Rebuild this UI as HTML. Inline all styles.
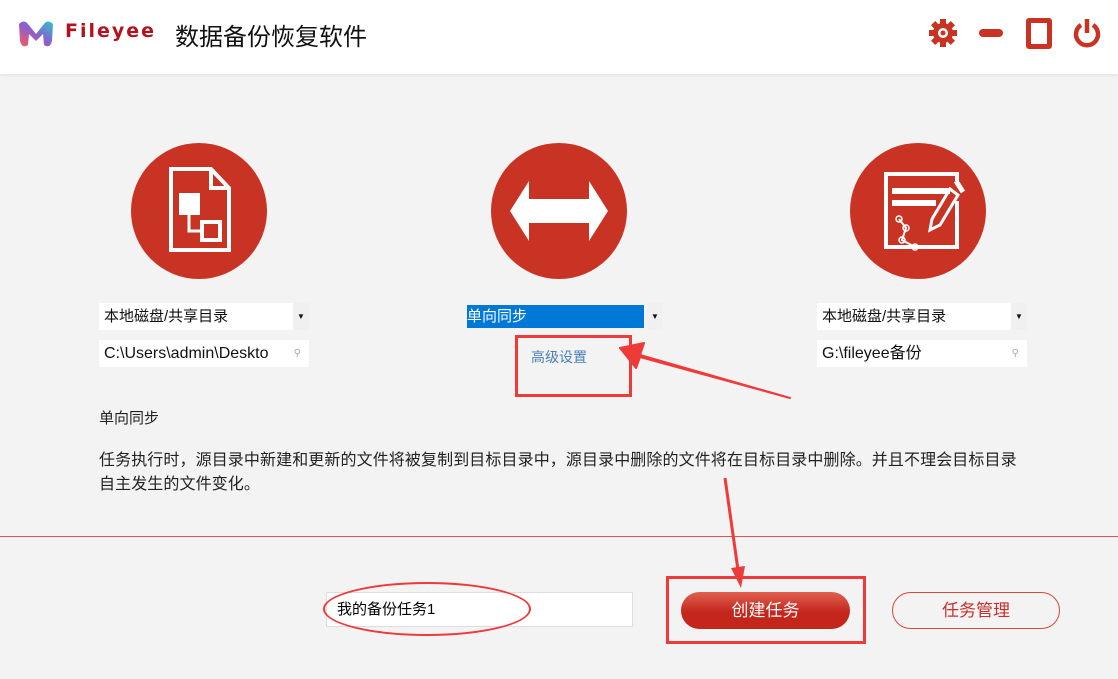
<!DOCTYPE html>
<html><head><meta charset="utf-8"><style>
body{margin:0;width:1118px;height:679px;background:#f3f3f3;position:relative;overflow:hidden;font-family:"Liberation Sans","Noto Sans CJK SC",sans-serif;}
.hdr{position:absolute;left:0;top:0;width:1118px;height:74px;background:#fff;box-shadow:0 1px 3px rgba(0,0,0,.08);}
.abs{position:absolute;}
.circ{position:absolute;width:136px;height:136px;border-radius:50%;background:#c93324;top:143px;}
.sel{position:absolute;height:27px;background:#fff;font-size:15px;line-height:27px;color:#111;}
.sel .dd{position:absolute;right:0;top:0;width:16px;height:27px;background:#f0f0f0;font-size:8px;text-align:center;line-height:27px;}
.txt{font-size:16px;color:#222;}
</style></head><body>
<div class="hdr">
 <svg class="abs" style="left:17px;top:19px" width="38" height="30" viewBox="0 0 38 30">
  <defs><linearGradient id="g" x1="0" y1="1" x2="1" y2="0"><stop offset="0" stop-color="#ff5a5a"/><stop offset=".5" stop-color="#8a5fd0"/><stop offset="1" stop-color="#2fc3c8"/></linearGradient></defs>
  <path d="M2 5 Q7 0 11 5 L19 15 L27 5 Q31 0 36 5 L35 22 Q33 30 27 26 L26 15 L19 22 L12 15 L11 26 Q5 30 3 22 Z" fill="url(#g)"/>
 </svg>
 <div class="abs" style="left:65px;top:20px;font-weight:bold;color:#b3121d;letter-spacing:2px;font-family:'DejaVu Sans',sans-serif;font-size:19px">Fileyee</div>
 <div class="abs" style="left:175px;top:17px;font-size:24px;color:#111;">数据备份恢复软件</div>
 <svg class="abs" style="left:928px;top:18px" width="30" height="30" viewBox="0 0 30 30"><g fill="#c93324"><circle cx="15" cy="15" r="10"/><rect x="12" y="1" width="6" height="28"/><rect x="1" y="12" width="28" height="6"/><rect x="12" y="1" width="6" height="28" transform="rotate(45 15 15)"/><rect x="12" y="1" width="6" height="28" transform="rotate(-45 15 15)"/></g><circle cx="15" cy="15" r="5" fill="#fff"/><circle cx="15" cy="15" r="2.5" fill="#c93324"/></svg>
 <div class="abs" style="left:979px;top:29px;width:24px;height:8px;border-radius:4px;background:#c93324"></div>
 <div class="abs" style="left:1026px;top:18px;width:16px;height:21px;border:5px solid #c93324;border-radius:3px"></div>
 <svg class="abs" style="left:1071px;top:17px" width="32" height="32" viewBox="0 0 32 32"><path d="M10 8 A11 11 0 1 0 22 8" fill="none" stroke="#c93324" stroke-width="4.5"/><line x1="16" y1="2" x2="16" y2="16" stroke="#c93324" stroke-width="4.5"/></svg>
</div>

<div class="circ" style="left:131px"></div>
<div class="circ" style="left:491px"></div>
<div class="circ" style="left:850px"></div>
<svg class="abs" style="left:131px;top:143px" width="136" height="136" viewBox="0 0 136 136">
 <path d="M40 26 H80 L98 45 V107 H40 Z" fill="none" stroke="#fff" stroke-width="4"/>
 <path d="M80 26 V45 H98" fill="none" stroke="#fff" stroke-width="4"/>
 <rect x="48" y="50" width="21" height="22" fill="#fff"/>
 <path d="M58 72 V88 H72" fill="none" stroke="#fff" stroke-width="3"/>
 <rect x="71" y="79" width="18" height="18" fill="none" stroke="#fff" stroke-width="4"/>
</svg>
<svg class="abs" style="left:491px;top:143px" width="136" height="136" viewBox="0 0 136 136"><path d="M19 68 L38 38 V56 H98 V38 L117 68 L98 98 V80 H38 V98 Z" fill="#fff"/></svg>
<svg class="abs" style="left:850px;top:143px" width="136" height="136" viewBox="0 0 136 136">
 <path d="M107 58 V104 H36 V31 H107 V38" fill="none" stroke="#fff" stroke-width="4"/>
 <rect x="42" y="45" width="58" height="6" fill="#fff"/><rect x="42" y="57" width="44" height="6" fill="#fff"/>
 <path d="M108 52 L90 82 L80 87 L82 76 L100 46 Z" fill="none" stroke="#fff" stroke-width="3"/>
 <path d="M106 38 L113 49" stroke="#fff" stroke-width="5"/>
 <path d="M49 76 L56 85 L52 97 L65 104" fill="none" stroke="#fff" stroke-width="2"/>
 <circle cx="49" cy="76" r="3" fill="none" stroke="#fff" stroke-width="1.5"/><circle cx="56" cy="85" r="3" fill="none" stroke="#fff" stroke-width="1.5"/><circle cx="52" cy="97" r="3" fill="none" stroke="#fff" stroke-width="1.5"/><circle cx="65" cy="104" r="3" fill="none" stroke="#fff" stroke-width="1.5"/>
</svg>

<div class="sel" style="left:99px;top:303px;width:210px;padding-left:5px;box-sizing:border-box">本地磁盘/共享目录<div class="dd">▼</div></div>
<div class="sel" style="left:99px;top:340px;width:210px;padding-left:5px;box-sizing:border-box;font-size:16px">C:\Users\admin\Deskto<span style="position:absolute;right:8px;color:#aaa;font-size:10px">&#9906;</span></div>
<div class="sel" style="left:465px;top:303px;width:198px;background:#f3f3f3"><div style="position:absolute;left:2px;top:2px;width:177px;height:23px;background:#0078d7;color:#fff;line-height:23px">单向同步</div><div class="dd">▼</div></div>
<div class="abs" style="left:531px;top:347px;font-size:14px;color:#4a7fb5">高级设置</div>
<div class="abs" style="left:515px;top:335px;width:111px;height:56px;border:3px solid #ef3a3a;"></div>
<div class="sel" style="left:817px;top:303px;width:210px;padding-left:5px;box-sizing:border-box">本地磁盘/共享目录<div class="dd">▼</div></div>
<div class="sel" style="left:817px;top:340px;width:210px;padding-left:5px;box-sizing:border-box;font-size:16px">G:\fileyee备份<span style="position:absolute;right:8px;color:#aaa;font-size:10px">&#9906;</span></div>

<div class="abs txt" style="left:99px;top:407px;font-size:15px">单向同步</div>
<div class="abs txt" style="left:99px;top:449px;line-height:24px;width:960px;letter-spacing:0.1px">任务执行时，源目录中新建和更新的文件将被复制到目标目录中，源目录中删除的文件将在目标目录中删除。并且不理会目标目录<br>自主发生的文件变化。</div>

<div class="abs" style="left:0;top:536px;width:1118px;height:1px;background:#d9534f"></div>

<div class="abs" style="left:326px;top:592px;width:307px;height:35px;background:#fff;border:1px solid #ddd;box-sizing:border-box;font-size:15px;line-height:33px;padding-left:10px">我的备份任务1</div>
<div class="abs" style="left:323px;top:582px;width:208px;height:54px;border:2px solid #ef3a3a;border-radius:50%;box-sizing:border-box"></div>
<div class="abs" style="left:666px;top:576px;width:200px;height:68px;border:3px solid #ef3a3a;box-sizing:border-box"></div>
<div class="abs" style="left:681px;top:592px;width:169px;height:37px;border-radius:19px;background:linear-gradient(#e0604f,#c4261c 55%);color:#fff;font-size:17px;text-align:center;line-height:37px">创建任务</div>
<div class="abs" style="left:892px;top:592px;width:168px;height:37px;border-radius:19px;border:1px solid #d9463c;box-sizing:border-box;color:#c9302c;font-size:17px;text-align:center;line-height:35px">任务管理</div>

<svg class="abs" style="left:0;top:0" width="1118" height="679">
 <path d="M790 398 L640 355 L644 343 L620 348 L636 368 L640 357 Z" fill="#ef3a3a" stroke="#ef3a3a" stroke-width="2" stroke-linejoin="round"/>
 <line x1="725" y1="478" x2="738" y2="570" stroke="#ef3a3a" stroke-width="3"/>
 <path d="M731 568 L741 588 L745 566 Z" fill="#ef3a3a"/>
</svg>
</body></html>
